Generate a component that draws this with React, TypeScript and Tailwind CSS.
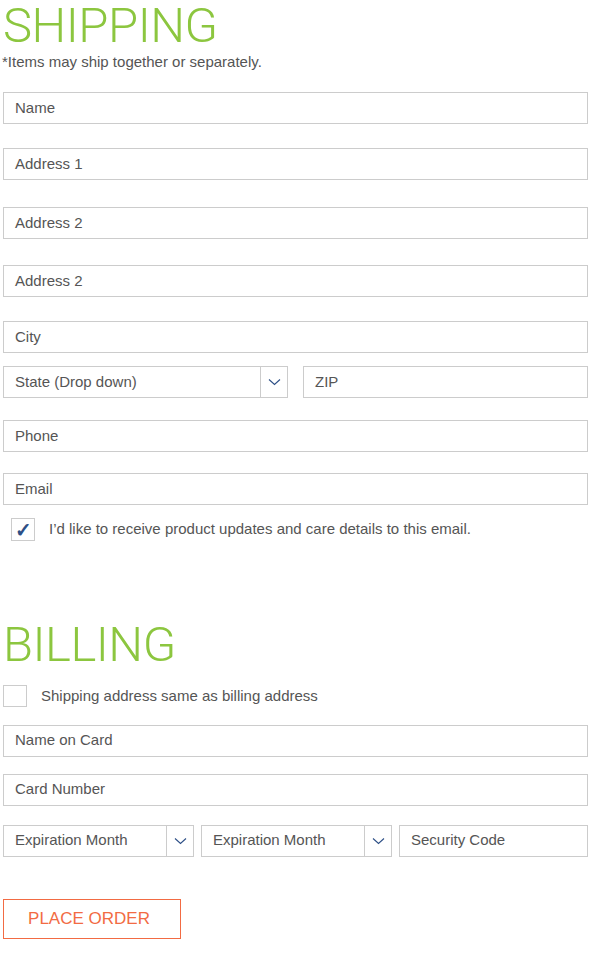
const font = { fontFamily: '"Liberation Sans", Arial, sans-serif' };

const Chevron = () => (
  <svg width="13" height="8" viewBox="0 0 13 8" fill="none">
    <path d="M1 1.5 L6.5 6.5 L12 1.5" stroke="#2d4f86" strokeWidth="1.1" />
  </svg>
);

const Field = ({ label, className = "" }: { label: string; className?: string }) => (
  <div
    className={`h-[32px] border border-[#cccccc] bg-white flex items-center pl-[11px] text-[15px] text-[#555555] ${className}`}
  >
    {label}
  </div>
);

const Select = ({ label, className = "" }: { label: string; className?: string }) => (
  <div className={`h-[32px] border border-[#cccccc] bg-white flex items-center text-[15px] text-[#555555] ${className}`}>
    <div className="flex-1 pl-[11px]">{label}</div>
    <div className="w-[27px] h-full border-l border-[#cccccc] flex items-center justify-center">
      <Chevron />
    </div>
  </div>
);

const Heading = ({ children }: { children: string }) => (
  <h1
    className="text-[#8cc63f] text-[49px] leading-[52px] font-light tracking-[-0.5px]"
    style={{ fontFamily: 'Roboto, "Liberation Sans", sans-serif' }}
  >
    {children}
  </h1>
);

export default function App() {
  return (
    <div className="w-[594px] bg-white pl-[3px] pr-[6px] pb-[17px]" style={font}>
      <Heading>SHIPPING</Heading>
      <p className="text-[15px] text-[#555555] mt-[1px] leading-[18px] -ml-[1px]">
        *Items may ship together or separately.
      </p>
      <Field label="Name" className="mt-[21px]" />
      <Field label="Address 1" className="mt-[24px]" />
      <Field label="Address 2" className="mt-[27px]" />
      <Field label="Address 2" className="mt-[26px]" />
      <Field label="City" className="mt-[24px]" />
      <div className="flex gap-[15px] mt-[13px]">
        <Select label="State (Drop down)" className="w-[285px]" />
        <Field label="ZIP" className="flex-1" />
      </div>
      <Field label="Phone" className="mt-[22px]" />
      <Field label="Email" className="mt-[21px]" />
      <label className="flex items-center mt-[13px] ml-[8px]">
        <span className="w-[24px] h-[23px] border border-[#cccccc] flex items-center justify-center text-[#2d4f86] text-[20px] leading-none font-bold">
          ✓
        </span>
        <span className="ml-[14px] text-[15px] text-[#555555]">
          I’d like to receive product updates and care details to this email.
        </span>
      </label>

      <div className="mt-[78px]">
        <Heading>BILLING</Heading>
      </div>
      <label className="flex items-center mt-[14px]">
        <span className="w-[24px] h-[22px] border border-[#cccccc]" />
        <span className="ml-[14px] text-[15px] text-[#555555]">Shipping address same as billing address</span>
      </label>
      <Field label="Name on Card" className="mt-[17px]" />
      <Field label="Card Number" className="mt-[17px]" />
      <div className="flex gap-[7px] mt-[19px]">
        <Select label="Expiration Month" className="w-[191px]" />
        <Select label="Expiration Month" className="w-[191px]" />
        <Field label="Security Code" className="flex-1" />
      </div>
      <button className="mt-[42px] w-[178px] h-[40px] border border-[#f26b43] text-[#f26b43] text-[17px] flex items-center justify-center pr-[6px]">
        PLACE ORDER
      </button>
    </div>
  );
}
